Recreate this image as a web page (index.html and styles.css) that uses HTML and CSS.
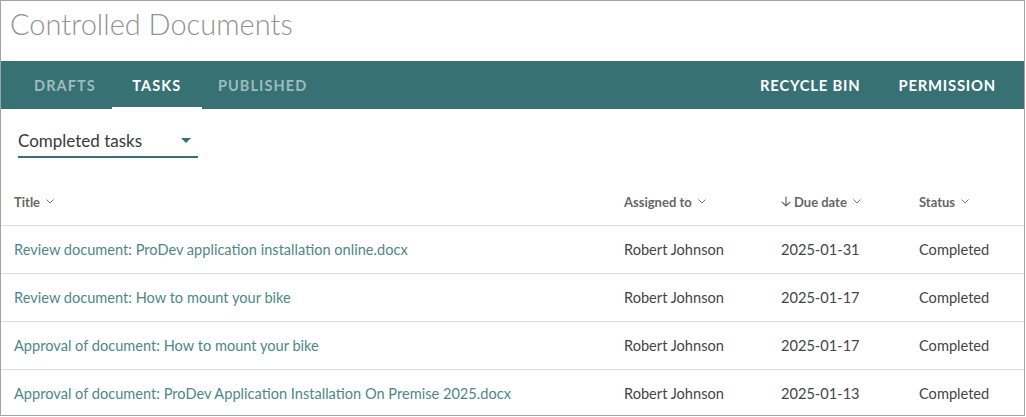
FILE: index.html
```html
<!DOCTYPE html>
<html>
<head>
<meta charset="utf-8">
<link rel="stylesheet" href="styles.css">
</head>
<body>
<div class="frame">
  <h1 class="page-title">Controlled Documents</h1>
  <nav class="tabbar">
    <div class="tabs">
      <a class="tab">DRAFTS</a>
      <a class="tab active">TASKS</a>
      <a class="tab">PUBLISHED</a>
    </div>
    <div class="tabs">
      <a class="tab light">RECYCLE BIN</a>
      <a class="tab light">PERMISSION</a>
    </div>
  </nav>
  <div class="filter">
    <div class="select">
      <span>Completed tasks</span>
      <span class="caret"></span>
    </div>
  </div>
  <div class="table">
    <div class="row head">
      <div class="cell">Title <svg class="chev" viewBox="0 0 8 5"><polyline points="0.5,0.5 4,4 7.5,0.5"/></svg></div>
      <div class="cell">Assigned to <svg class="chev" viewBox="0 0 8 5"><polyline points="0.5,0.5 4,4 7.5,0.5"/></svg></div>
      <div class="cell"><svg class="arrow" viewBox="0 0 10 11"><path d="M5 0.5 V10 M1 6 L5 10 L9 6"/></svg>Due date <svg class="chev" viewBox="0 0 8 5"><polyline points="0.5,0.5 4,4 7.5,0.5"/></svg></div>
      <div class="cell">Status <svg class="chev" viewBox="0 0 8 5"><polyline points="0.5,0.5 4,4 7.5,0.5"/></svg></div>
    </div>
    <div class="row">
      <div class="cell link">Review document: ProDev application installation online.docx</div>
      <div class="cell">Robert Johnson</div>
      <div class="cell">2025-01-31</div>
      <div class="cell">Completed</div>
    </div>
    <div class="row">
      <div class="cell link">Review document: How to mount your bike</div>
      <div class="cell">Robert Johnson</div>
      <div class="cell">2025-01-17</div>
      <div class="cell">Completed</div>
    </div>
    <div class="row">
      <div class="cell link">Approval of document: How to mount your bike</div>
      <div class="cell">Robert Johnson</div>
      <div class="cell">2025-01-17</div>
      <div class="cell">Completed</div>
    </div>
    <div class="row">
      <div class="cell link">Approval of document: ProDev Application Installation On Premise 2025.docx</div>
      <div class="cell">Robert Johnson</div>
      <div class="cell">2025-01-13</div>
      <div class="cell">Completed</div>
    </div>
  </div>
</div>
</body>
</html>
```
FILE: styles.css
```css
* { box-sizing: border-box; }
html, body { margin: 0; padding: 0; background: #fff; }
body { font-family: "Lato", "Open Sans", sans-serif; color: #333; }

.frame {
  width: 1025px;
  height: 416px;
  border: 1px solid #a3a3a3;
  overflow: hidden;
  background: #fff;
}

.page-title {
  margin: 0;
  height: 60px;
  padding: 5px 0 0 9px;
  font-size: 29px;
  line-height: 36px;
  font-weight: 300;
  color: #929292;
}

.tabbar {
  height: 48px;
  background: #387173;
  display: flex;
  justify-content: space-between;
  padding: 0 9px 0 17px;
}
.tabs { display: flex; }
.tab {
  min-width: 90px;
  padding: 0 16px;
  display: flex;
  align-items: center;
  justify-content: center;
  font-size: 14.5px;
  font-weight: 700;
  letter-spacing: 1.1px;
  color: #9dbcbc;
  border-bottom: 2px solid transparent;
  padding-top: 2px;
}
.tab.active { color: #fff; border-bottom-color: #fff; }
.tab.light {
  color: #fff;
  letter-spacing: 0.8px;
  font-size: 14.8px;
  padding: 2px 19px 0;
}

.filter { padding: 16px 0 0 17px; }
.select {
  width: 180px;
  height: 33px;
  border-bottom: 2px solid #387173;
  display: flex;
  align-items: center;
  justify-content: space-between;
  font-size: 17px;
  color: #3a3a3a;
  padding: 0 7px 0 0;
}
.caret {
  width: 0; height: 0;
  border-left: 5px solid transparent;
  border-right: 5px solid transparent;
  border-top: 5px solid #387173;
}

.table { margin-top: 20px; }
.row {
  display: grid;
  grid-template-columns: 610px 157px 138px 1fr;
  height: 48px;
  border-bottom: 1px solid #dcdcdc;
  align-items: center;
}
.cell {
  padding-left: 13px;
  font-size: 14.6px;
  color: #454545;
  white-space: nowrap;
  display: flex;
  align-items: center;
}
.cell.link { color: #4f8789; }
.head .cell {
  font-size: 13px;
  font-weight: 700;
  color: #666;
}
.chev {
  width: 8px; height: 5px;
  margin-left: 6px;
  fill: none;
  stroke: #777;
  stroke-width: 1;
}
.arrow {
  width: 10px; height: 11px;
  margin-right: 3px;
  fill: none;
  stroke: #666;
  stroke-width: 1.2;
}
```
